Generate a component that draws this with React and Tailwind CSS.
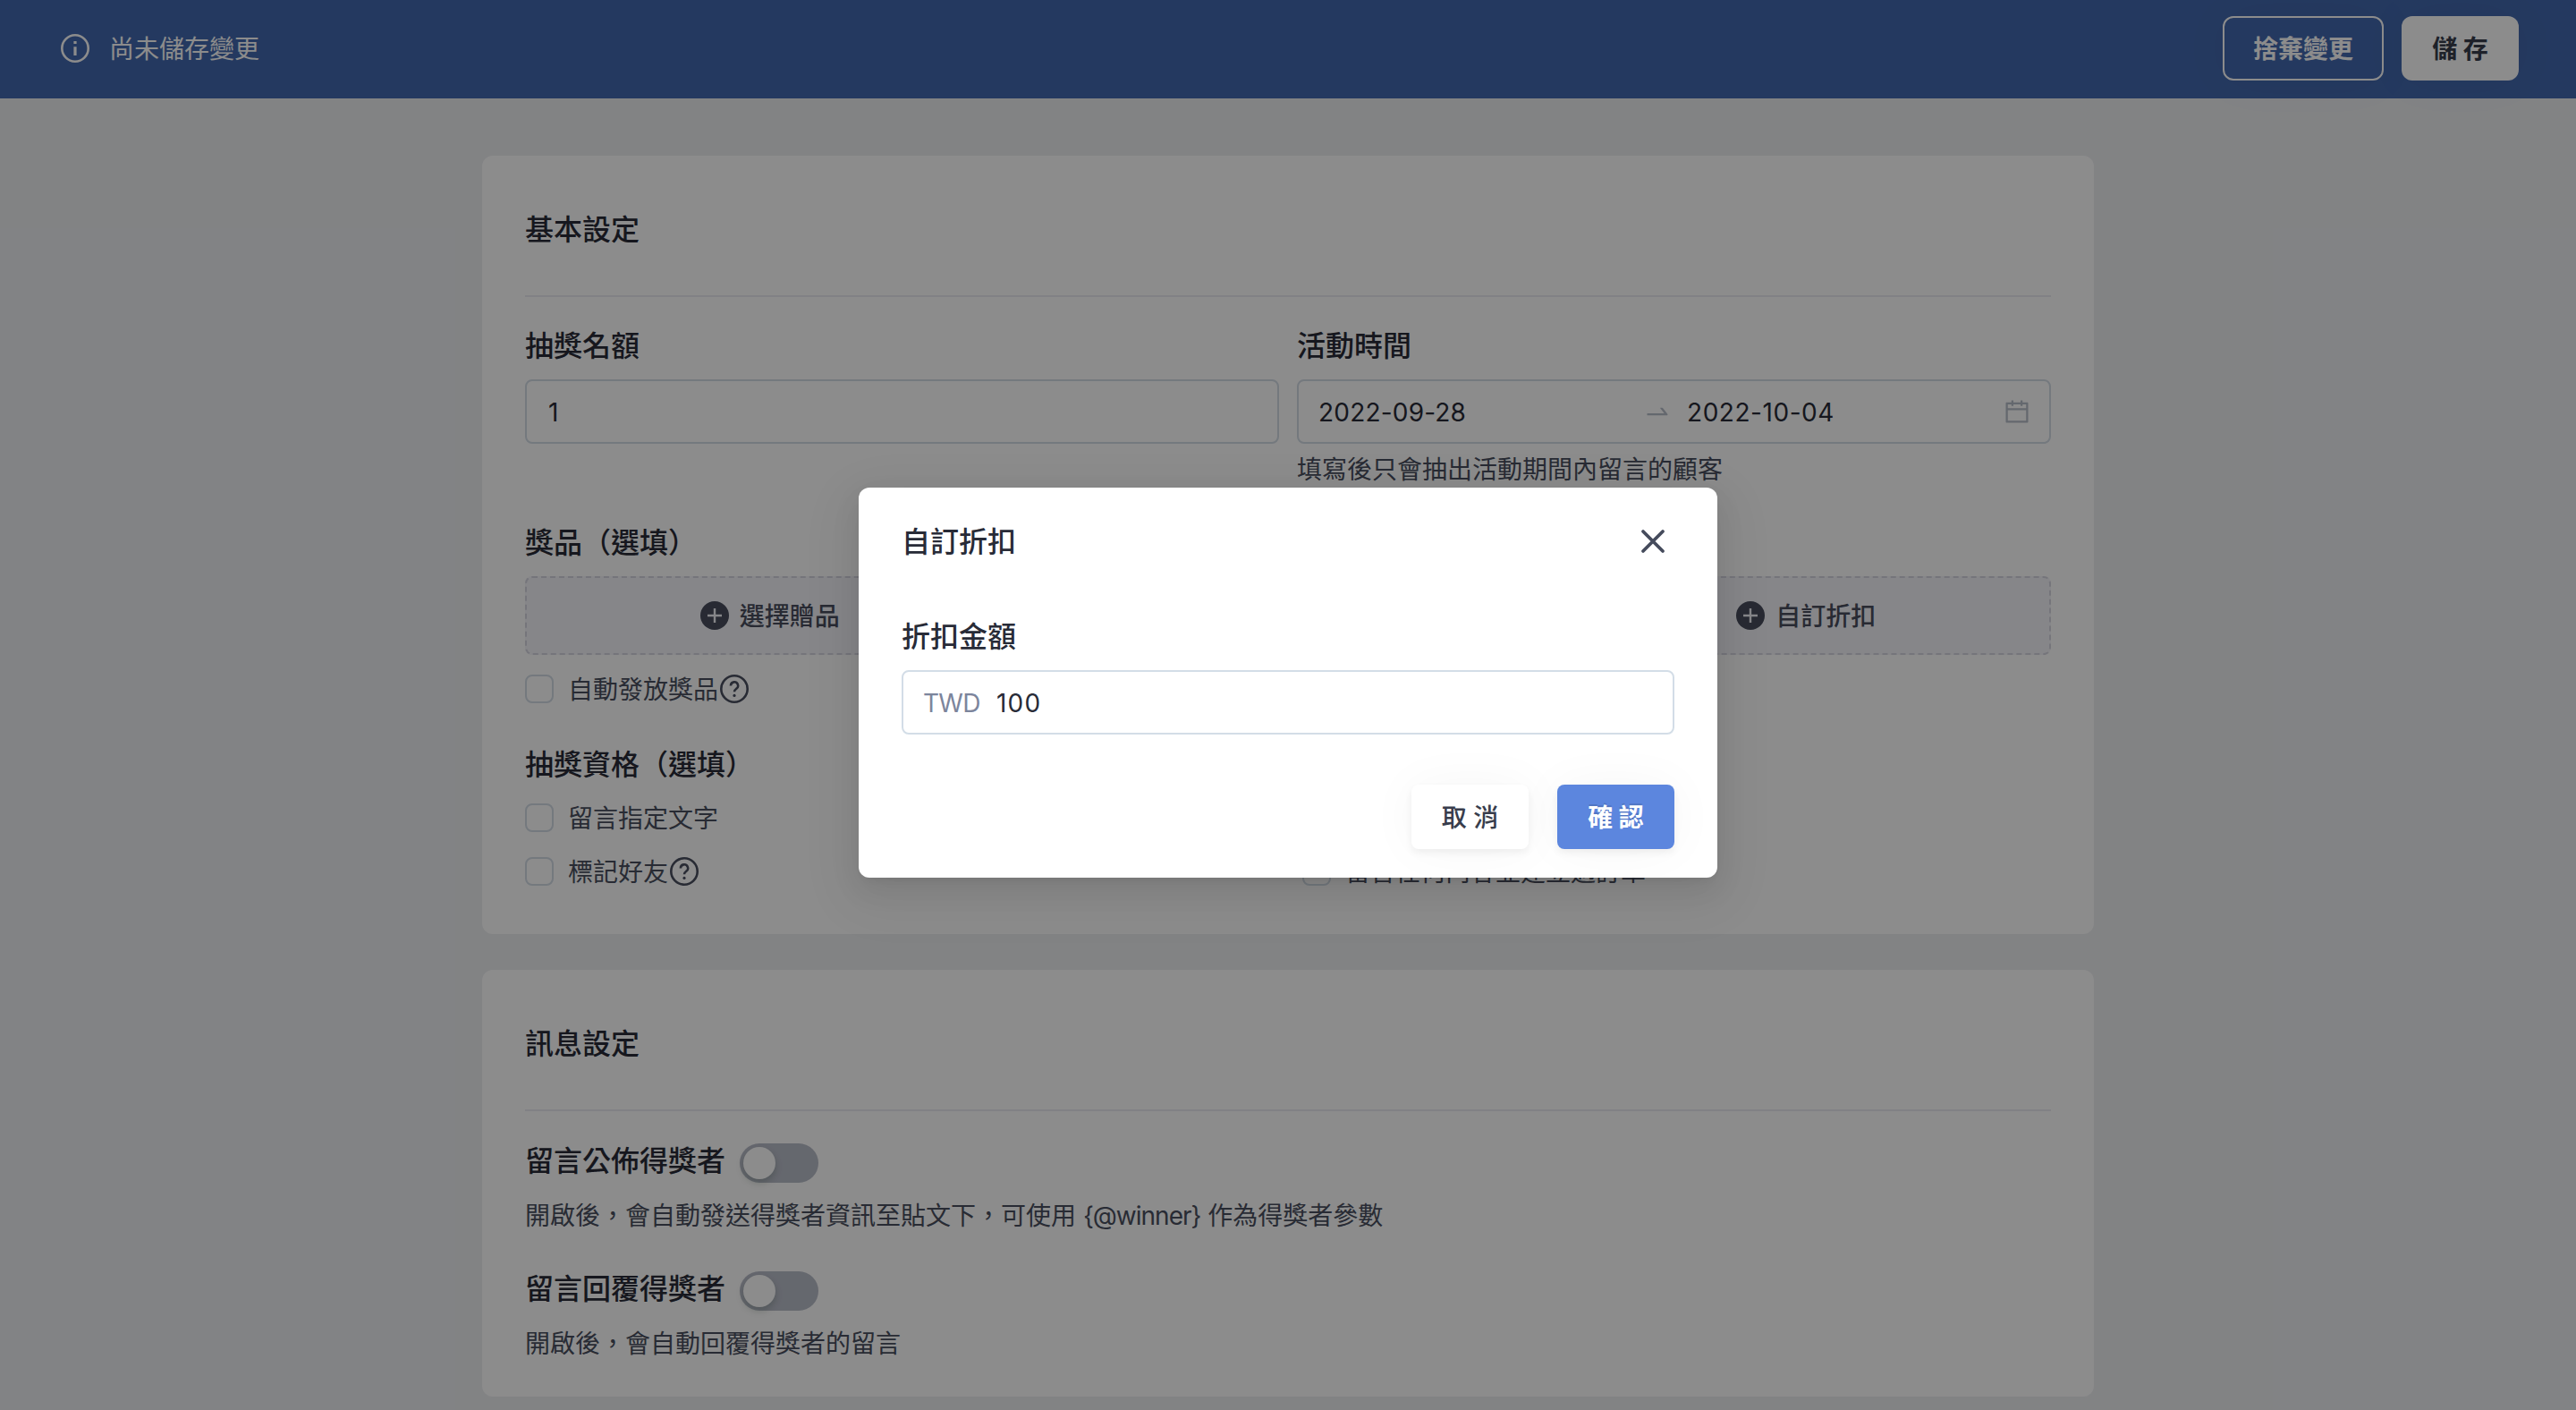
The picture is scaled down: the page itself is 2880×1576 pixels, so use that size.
import { useState } from "react";

function InfoIcon() {
  return (
    <svg viewBox="0 0 32 32" className="size-8 shrink-0" fill="none">
      <circle cx="16" cy="16" r="14.7" stroke="currentColor" strokeWidth="2.6" />
      <path d="M14.4 8h3.2v3.1h-3.2zM14.4 14.2h3.2V24h-3.2z" fill="currentColor" />
    </svg>
  );
}

function HelpIcon() {
  return (
    <svg viewBox="0 0 32 32" className="size-8 shrink-0" fill="none" stroke="currentColor" strokeWidth="2.6">
      <circle cx="16" cy="16" r="14.7" />
      <path d="M11.9 12.4a4.1 4.1 0 1 1 6.1 3.6c-1.4.9-2 1.6-2 3.2" />
      <circle cx="16" cy="23.4" r="1.6" fill="currentColor" stroke="none" />
    </svg>
  );
}

function PlusIcon() {
  return (
    <svg viewBox="0 0 32 32" className="size-8 shrink-0">
      <circle cx="16" cy="16" r="16" fill="#494e5e" />
      <path d="M16 8v16M8 16h16" stroke="#f4f4f9" strokeWidth="2.4" />
    </svg>
  );
}

function SwapRightIcon() {
  return (
    <svg viewBox="0 0 1024 1024" className="size-8 shrink-0" fill="currentColor">
      <path d="M873.1 596.2l-164-208A32 32 0 00684 376h-64.8c-6.7 0-10.4 7.7-6.3 13l144.3 183H152c-4.4 0-8 3.6-8 8v60c0 4.4 3.6 8 8 8h695.9c26.8 0 41.7-30.8 25.2-51.8z" />
    </svg>
  );
}

function CalendarIcon() {
  return (
    <svg viewBox="0 0 1024 1024" className="size-8 shrink-0" fill="currentColor">
      <path d="M880 184H712v-64c0-4.4-3.6-8-8-8h-56c-4.4 0-8 3.6-8 8v64H384v-64c0-4.4-3.6-8-8-8h-56c-4.4 0-8 3.6-8 8v64H144c-17.7 0-32 14.3-32 32v664c0 17.7 14.3 32 32 32h736c17.7 0 32-14.3 32-32V216c0-17.7-14.3-32-32-32zm-40 656H184V460h656v380zM184 392V256h128v48c0 4.4 3.6 8 8 8h56c4.4 0 8-3.6 8-8v-48h256v48c0 4.4 3.6 8 8 8h56c4.4 0 8-3.6 8-8v-48h128v136H184z" />
    </svg>
  );
}

function CloseIcon() {
  return (
    <svg viewBox="0 0 28 28" className="size-7" fill="none" stroke="currentColor" strokeWidth="3.8" strokeLinecap="round">
      <path d="M3 3l22 22M25 3L3 25" />
    </svg>
  );
}

function Checkbox({ label, help }) {
  return (
    <label className="flex h-8 items-center text-[28px] leading-8 text-[#4a4f60]">
      <span className="mr-4 size-8 shrink-0 rounded-lg border-2 border-[#d3dce6]" />
      <span className="pt-0.5">{label}</span>
      {help && (
        <span className="ml-0.5">
          <HelpIcon />
        </span>
      )}
    </label>
  );
}

function AddButton({ label }) {
  return (
    <button className="flex h-[88px] items-center justify-center gap-3 rounded-lg border-2 border-dashed border-[#d5d5e0] bg-[#f4f4f9] text-[28px] font-medium text-[#494e5e]">
      <PlusIcon />
      <span className="pt-0.5">{label}</span>
    </button>
  );
}

function Card({ title, className, children }) {
  return (
    <section className={`mx-auto w-[1802px] rounded-xl bg-white px-12 ${className}`}>
      <h2 className="flex h-[158px] items-center border-b-2 border-[#ebebf2] pt-2.5 text-[32px] font-medium">{title}</h2>
      {children}
    </section>
  );
}

function SwitchField({ label, description }) {
  const [on, setOn] = useState(false);

  return (
    <div className="h-[143px]">
      <div className="flex h-11 items-center">
        <h3 className="-mt-[5px] w-60 text-[32px] leading-[44px] font-medium">{label}</h3>
        <button
          onClick={() => setOn(!on)}
          className={`flex h-11 w-[88px] items-center rounded-full p-1 ${on ? "justify-end bg-[#5c86de]" : "bg-[#b9bdc9]"}`}
        >
          <span className="size-9 rounded-full bg-white shadow-[0_4px_8px_rgba(0,35,11,0.2)]" />
        </button>
      </div>
      <p className="mt-[17px] text-[28px] leading-10 text-[#4a4f60]">{description}</p>
    </div>
  );
}

function DiscountModal({ onClose }) {
  const [amount, setAmount] = useState("100");

  return (
    <div className="absolute inset-0 flex items-start justify-center bg-black/45 pt-[545px]">
      <div className="h-[436px] w-[960px] rounded-xl bg-white px-12 shadow-[0_6px_12px_-8px_rgba(0,0,0,0.12),0_12px_32px_rgba(0,0,0,0.08),0_18px_56px_16px_rgba(0,0,0,0.05)]">
        <div className="flex h-[120px] items-center justify-between pr-2.5 text-[32px] font-medium">
          <h2 className="pt-0.5">自訂折扣</h2>
          <button onClick={onClose} className="text-[#454b5c]">
            <CloseIcon />
          </button>
        </div>
        <h3 className="mt-6 h-[60px] text-[32px] leading-[46px] font-medium">折扣金額</h3>
        <div className="flex h-[72px] items-center rounded-lg border-2 border-[#d3dde7] pt-0.5 pl-[22px] text-[28px]">
          <span className="w-[82px] tracking-[-0.7px] text-[#7c859c]">TWD</span>
          <input
            value={amount}
            onChange={(e) => setAmount(e.target.value)}
            className="w-40 tracking-[1.2px] outline-none"
          />
        </div>
        <div className="mt-14 flex justify-end gap-8">
          <button
            onClick={onClose}
            className="h-[72px] w-[131px] rounded-lg bg-white pt-0.5 text-[28px] font-medium text-[#383d4c] shadow-[0_4px_8px_rgba(0,0,0,0.06),0_0_56px_rgba(0,0,0,0.04)]"
          >
            取 消
          </button>
          <button
            onClick={onClose}
            className="h-[72px] w-[131px] rounded-lg bg-[#5c86de] pt-0.5 text-[28px] font-bold text-white shadow-[0_4px_8px_rgba(0,0,0,0.06),0_0_56px_rgba(0,0,0,0.04)] [text-shadow:0_-2px_0_rgba(0,0,0,0.12)]"
          >
            確 認
          </button>
        </div>
      </div>
    </div>
  );
}

export default function App() {
  const [open, setOpen] = useState(true);

  return (
    <div className="relative h-[1576px] w-[2880px] overflow-hidden bg-[#edeef1] font-['Inter','Noto_Sans_CJK_TC',sans-serif] text-[#282b37]">
      {/* Unsaved changes bar */}
      <header className="flex h-[110px] items-center bg-[#4369af] pr-16 pb-0.5 pl-[68px] text-[28px] text-white">
        <InfoIcon />
        <span className="ml-[22px] pt-0.5">尚未儲存變更</span>
        <button className="ml-auto h-[72px] w-[180px] rounded-xl border-2 border-white pt-0.5 font-bold shadow-[0_0_56px_rgba(0,0,0,0.04)]">
          捨棄變更
        </button>
        <button className="ml-5 h-[72px] w-[131px] rounded-xl bg-white pt-0.5 font-bold text-[#383d4c] shadow-[0_0_56px_rgba(0,0,0,0.04)]">
          儲 存
        </button>
      </header>

      {/* Basic settings */}
      <Card title="基本設定" className="mt-16 h-[870px]">
        <div className="grid h-[210px] grid-cols-2 gap-5 pt-[32px]">
          <div>
            <h3 className="h-[60px] text-[32px] leading-[46px] font-medium">抽獎名額</h3>
            <div className="flex h-[72px] items-center rounded-lg border-2 border-[#d3dce6] px-6 pt-0.5 text-[28px]">1</div>
          </div>
          <div>
            <h3 className="h-[60px] text-[32px] leading-[46px] font-medium">活動時間</h3>
            <div className="flex h-[72px] items-center rounded-lg border-2 border-[#d3dce6] pr-5 pl-[22px] text-[28px]">
              <span className="w-[363px] pt-0.5 tracking-[0.2px]">2022-09-28</span>
              <span className="w-[49px] text-[#b7bdc8]">
                <SwapRightIcon />
              </span>
              <span className="pt-0.5 tracking-[0.55px]">2022-10-04</span>
              <span className="ml-auto text-[#b7bdc8]">
                <CalendarIcon />
              </span>
            </div>
            <p className="mt-[9px] text-[28px] leading-10 text-[#4a4f60]">填寫後只會抽出活動期間內留言的顧客</p>
          </div>
        </div>

        <h3 className="mt-[42px] h-[60px] text-[32px] leading-[46px] font-medium">獎品（選填）</h3>
        <div className="mb-[22px] grid grid-cols-3 gap-8">
          <AddButton label="選擇贈品" />
          <AddButton label="選擇優惠" />
          <AddButton label="自訂折扣" />
        </div>
        <Checkbox label="自動發放獎品" help />

        <h3 className="mt-[46px] h-[66px] text-[32px] leading-[46px] font-medium">抽獎資格（選填）</h3>
        <div className="flex">
          <div className="flex w-[869px] flex-col gap-7">
            <Checkbox label="留言指定文字" />
            <Checkbox label="標記好友" help />
          </div>
          <div className="flex flex-col gap-7">
            <Checkbox label="分享貼文" />
            <Checkbox label="留言任何內容並建立過訂單" />
          </div>
        </div>
      </Card>

      {/* Message settings */}
      <Card title="訊息設定" className="mt-10 h-[477px]">
        <div className="pt-9">
          <SwitchField
            label="留言公佈得獎者"
            description={
              <>
                開啟後，會自動發送得獎者資訊至貼文下，可使用 <span className="tracking-[-1px]">{"{@winner}"}</span> 作為得獎者參數
              </>
            }
          />
          <SwitchField label="留言回覆得獎者" description="開啟後，會自動回覆得獎者的留言" />
        </div>
      </Card>

      {open && <DiscountModal onClose={() => setOpen(false)} />}
    </div>
  );
}
